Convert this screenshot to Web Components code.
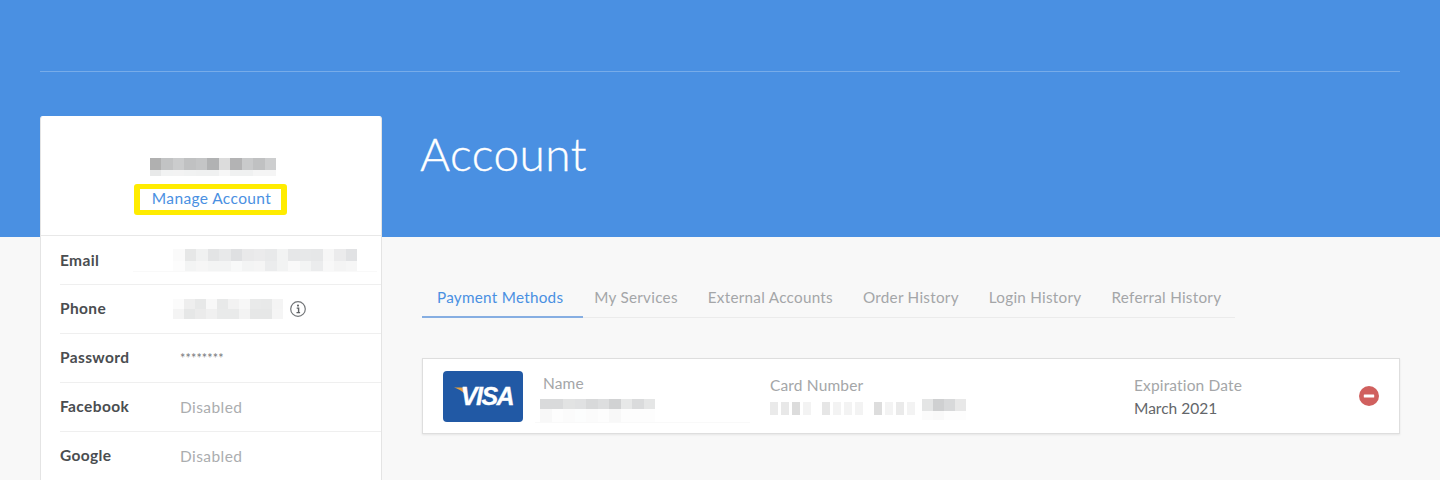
<!DOCTYPE html>
<html><head><meta charset="utf-8"><title>Account</title>
<style>html,body{margin:0;height:480px;overflow:hidden}body{font-family:Lato,"Open Sans",sans-serif}</style>
</head><body>
<account-page></account-page>
<script>
function def(name,css,html,extra){
  customElements.define(name,class extends HTMLElement{
    constructor(){super();const r=this.attachShadow({mode:'open'});r.innerHTML='<style>'+css+'</style>'+html;}
    connectedCallback(){if(extra)extra(this);}
  });
}
/* blurred redaction block: rows separated by |, each row a list of gray hex cells */
def('blur-block',`:host{display:block;position:relative;flex:none}.r{display:flex}.r i{display:block;width:var(--w,11.5px);height:var(--h1,12px);flex:none}.r+.r i{height:var(--h2,11px)}
.line{position:absolute;height:1px;background:#f9f9f9}`,'',el=>{
  const rows=(el.getAttribute('data')||'').split('|');
  let html=rows.map(r=>'<div class="r">'+r.trim().split(/\s+/).map(c=>'<i style="background:#'+c+'"></i>').join('')+'</div>').join('');
  const ln=el.getAttribute('line');
  if(ln){const [l,t,w]=ln.split(',');html+='<div class="line" style="left:'+l+'px;top:'+t+'px;width:'+w+'px"></div>';}
  el.shadowRoot.innerHTML+=html;
});
def('digit-group',`:host{display:flex;gap:3px;flex:none}i{display:block;width:8px;height:13px}`,'',el=>{
  el.shadowRoot.innerHTML+=el.getAttribute('data').trim().split(/\s+/).map(c=>'<i style="background:#'+c+'"></i>').join('');
});
def('info-icon',`:host{display:inline-flex}`,`<svg width="16" height="16" viewBox="0 0 16 16" fill="none"><circle cx="8" cy="8" r="7.3" stroke="#737679" stroke-width="1.2"/><circle cx="8" cy="4.6" r="1.05" fill="#5f6265"/><path d="M6.7 7.1h1.9v4.3M6.5 11.6h3.6" stroke="#5f6265" stroke-width="1.4"/></svg>`);
def('info-row',`:host{display:flex;align-items:center;height:49px;box-sizing:border-box;border-bottom:1px solid #efefef;margin-left:19px;font-size:15.5px;padding-bottom:2px}
:host([first]){padding-bottom:0}
.l{width:120px;flex:none;font-weight:700;color:#4a4d50;letter-spacing:.38px}.v{display:flex;align-items:center;color:#abadaf;font-size:15.5px;letter-spacing:.42px;padding-top:1px}`,
`<div class="l"><slot name="label"></slot></div><div class="v"><slot></slot></div>`);
def('profile-card',`:host{display:block;width:342px;flex:none;box-sizing:border-box;background:#fff;border-radius:3px 3px 0 0;border:1px solid #e4e4e4;border-top-color:#fff;align-self:flex-start}
.top{height:119px;box-sizing:border-box;border-bottom:1px solid #e8e8e8;display:flex;flex-direction:column;align-items:center;padding:41px 0 0 4px}
.link{margin:8px 0 0 -5px;width:153px;height:31px;box-sizing:border-box;border:5px solid #ffec00;border-width:5px 6px;border-radius:3px;display:flex;align-items:center;justify-content:center;color:#4a90e2;font-size:15.5px;letter-spacing:.38px;padding:0 0 3px 2px}`,
`<div class="top"><blur-block style="--w:11.5px;--h1:12px;--h2:6px" data="b0b0b0 c2c3c4 cbcccd c0c1c2 c4c5c6 b1b2b3 dcdcdc b3b3b4 c9cacb c0c1c2 cdcecf|e8e9e9 f2f3f3 f3f3f3 f1f2f2 f0f1f1 f0f1f1 f7f7f7 f0f1f1 f0f1f1 f5f5f5 f5f5f5"></blur-block><div class="link">Manage Account</div></div><slot></slot>`);
def('tab-bar',`:host{display:flex;width:813px;border-bottom:1px solid #ebebeb;height:36px;box-sizing:border-box}`,`<slot></slot>`);
def('tab-item',`:host{display:block;padding:0 15px;height:36px;box-sizing:border-box;line-height:31px;color:#a4a6a8;font-size:15.25px;letter-spacing:.27px;white-space:nowrap}
:host([active]){color:#4a90e2;border-bottom:2px solid #86aee2;padding-right:20px;margin-right:-4px}`,`<slot></slot>`);
def('card-field',`:host{display:block;color:#a4a6a8;font-size:15.5px;letter-spacing:.15px;padding-top:3px}.l{height:21px;line-height:21px}.v{color:#63666a;height:24px;line-height:24px;letter-spacing:0}`,`<div class="l"><slot name="label"></slot></div><div class="v"><slot></slot></div>`);
def('visa-logo',`:host{display:flex;position:relative;width:80px;height:51px;background:#2159a5;border-radius:4px;align-items:center;justify-content:center;flex:none}
span{position:relative;z-index:1;font:italic 700 25px "Liberation Sans",sans-serif;color:#fff;letter-spacing:-1.5px;margin-left:8px;margin-top:1px;-webkit-text-stroke:.3px #fff}
svg{position:absolute;left:10px;top:16px}`,
`<span>VISA</span><svg width="16" height="12" viewBox="0 0 16 12"><path d="M1 .5H10C11.5 .5 12 1.5 12.3 3L14 10C12 6 7 2.5 1 .5Z" fill="#e4a13f"/></svg>`);
def('minus-icon',`:host{display:flex}`,`<svg width="20" height="20" viewBox="0 0 20 20"><circle cx="10" cy="10" r="10" fill="#d0605e"/><rect x="4.8" y="8.6" width="10.4" height="2.8" rx=".5" fill="#fff"/></svg>`);
def('payment-card',`:host{display:flex;align-items:center;width:978px;height:76px;box-sizing:border-box;background:#fff;border:1px solid #dedede;box-shadow:0 1px 2px rgba(0,0,0,.08);margin-top:40px;padding:0 20px}
.name{margin-left:20px;width:227px;flex:none}.num{width:364px;flex:none}.exp{flex:1}
.mask{display:flex;gap:11px;align-items:flex-start;padding-top:6px}`,
`<visa-logo></visa-logo>
<card-field class="name"><span slot="label">Name</span><blur-block style="--w:11.5px;--h1:10px;--h2:13px;margin:5px 0 0 -3px" line="-5,23,215" data="d9dadb d9dadb e2e3e3 e0e1e2 d8d9da dddedf d1d2d3 e7e8e8 dadbdc e5e6e6|f8f8f8 fdfdfd fbfbfb fcfdfd fbfbfb fdfdfd f8f8f8 fdfdfd fdfdfd fdfdfd"></blur-block></card-field>
<card-field class="num"><span slot="label">Card Number</span><div class="mask"><digit-group data="eaeaea e8e8e8 dcdcdc f3f3f3"></digit-group><digit-group data="e6e6e6 f3f3f3 f3f3f3 f3f3f3"></digit-group><digit-group data="dddddd f3f3f3 eaeaea f3f3f3"></digit-group><blur-block style="--w:11px;--h1:12px;--h2:9px;margin:-3px 0 0 -4px" data="e4e5e5 cfd0d1 d8d9da e8e8e8|fbfbfb f9f9f9 fdfdfd fdfdfd"></blur-block></div></card-field>
<card-field class="exp"><span slot="label">Expiration Date</span>March 2021</card-field>
<minus-icon></minus-icon>`);
def('account-page',`:host{display:block;height:480px;overflow:hidden;box-sizing:border-box;padding:0 40px;background:linear-gradient(#4a90e2 237px,#f8f8f8 237px)}
.rule{height:72px;box-sizing:border-box;border-bottom:1px solid rgba(255,255,255,.25)}
.cols{display:flex;margin-top:44px;gap:40px}
.main{flex:1;min-width:0}
h1{margin:0 0 0 -2px;height:80px;line-height:76px;font-size:46px;font-weight:300;color:#fff;letter-spacing:.45px;-webkit-text-stroke:.35px #fff}
tab-bar{margin-top:86px}`,
`<div class="rule"></div><div class="cols"><profile-card>
<info-row first><span slot="label">Email</span><blur-block style="--w:11.5px;--h1:12px;--h2:11px;margin:-1px 0 0 -7px" line="-40,22,244" data="fafafa e6e7e7 f0f1f1 e3e4e5 e8e9ea dfe0e2 e9e9ea ebebec e8e9ea f2f3f3 e6e7e8 e7e8e9 e6e7e8 f6f6f6 ebebec e1e2e4|fcfcfc f3f4f4 f6f6f6 f3f4f4 f3f4f4 f8f9f9 f3f4f4 f5f5f5 ebeced f2f3f3 f9f9f9 f3f4f4 ebeced f8f8f8 f4f4f4 f6f6f6"></blur-block></info-row>
<info-row><span slot="label">Phone</span><blur-block style="--w:11px;--h1:10px;--h2:10px;margin:1px 0 0 -7px" data="fbfbfb eeeeee e7e8e8 f8f8f8 e8e9e9 f2f2f2 f7f7f7 e9eaea e8e9e9 f4f4f4|f4f4f4 e6e7e7 ebebeb f0f0f0 e9eaea e9eaea f3f3f3 e6e7e7 e6e7e7 f5f5f5"></blur-block><info-icon style="margin:0 0 0 7px"></info-icon></info-row>
<info-row><span slot="label">Password</span><span style="font-size:12.5px;color:#77797b;letter-spacing:.15px;margin-top:2px">********</span></info-row>
<info-row><span slot="label">Facebook</span>Disabled</info-row>
<info-row><span slot="label">Google</span>Disabled</info-row>
</profile-card><div class="main"><h1>Account</h1>
<tab-bar><tab-item active>Payment Methods</tab-item><tab-item>My Services</tab-item><tab-item>External Accounts</tab-item><tab-item>Order History</tab-item><tab-item>Login History</tab-item><tab-item>Referral History</tab-item></tab-bar>
<payment-card></payment-card></div></div>`);
</script></body></html>
